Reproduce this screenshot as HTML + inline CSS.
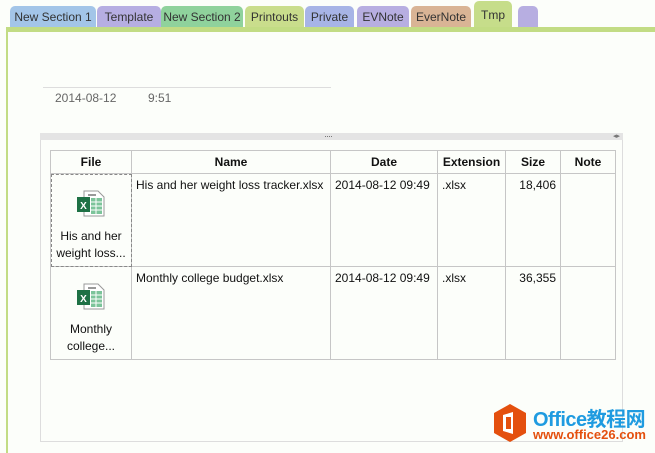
<!DOCTYPE html>
<html><head><meta charset="utf-8"><style>
*{margin:0;padding:0;box-sizing:border-box}
body{width:655px;height:453px;overflow:hidden;background:#fcfefa;font-family:"Segoe UI","Liberation Sans",sans-serif;position:relative}
.tab{position:absolute;top:6px;height:22px;border-radius:5px 5px 0 0;font-size:12px;color:#333;text-align:center;line-height:22px}
.band{position:absolute;left:6px;top:27px;width:649px;height:5px;background:#c2dc84}
.lb{position:absolute;left:6px;top:27px;width:2px;height:426px;background:#c2dc84}
.abs{position:absolute}
table{position:absolute;left:50px;top:150px;border-collapse:collapse;font-size:12px;color:#111}
td,th{border:1px solid #c6c6c6;vertical-align:top}
th{height:23px;font-weight:bold;text-align:center;vertical-align:middle}
td{height:93px;padding:4px 4px}
.ic{text-align:center;padding-top:16px;line-height:17px}
</style></head><body>
<div class="tab" style="left:10px;width:86px;background:#a3c5e8">New Section 1</div>
<div class="tab" style="left:97px;width:64px;background:#b6aee2">Template</div>
<div class="tab" style="left:161px;width:82px;background:#8fd29c">New Section 2</div>
<div class="tab" style="left:245px;width:59px;background:#c9dd8c">Printouts</div>
<div class="tab" style="left:305px;width:49px;background:#a7b4e6">Private</div>
<div class="tab" style="left:357px;width:52px;background:#b7aee1">EVNote</div>
<div class="tab" style="left:411px;width:60px;background:#d9b495">EverNote</div>
<div class="tab" style="left:474px;width:38px;top:1px;height:27px;background:#c6dd8a;line-height:28px">Tmp</div>
<div class="tab" style="left:518px;width:20px;background:#b7aee1"></div>
<div class="band"></div><div class="lb"></div>
<div class="abs" style="left:43px;top:87px;width:288px;height:1px;background:#ddd"></div>
<div class="abs" style="left:55px;top:91px;font-size:12px;color:#666">2014-08-12</div>
<div class="abs" style="left:148px;top:91px;font-size:12px;color:#666">9:51</div>
<div class="abs" style="left:40px;top:133px;width:583px;height:309px;border:1px solid #ddd;border-top:none"></div>
<div class="abs" style="left:40px;top:133px;width:583px;height:7px;background:#e4e4e4"></div>
<div class="abs" style="left:324px;top:131px;font-size:9px;color:#666;letter-spacing:-1px">····</div>
<div class="abs" style="left:613px;top:132px;font-size:7px;color:#777">◂▸</div>
<table>
<tr><th style="width:81px">File</th><th style="width:199px">Name</th><th style="width:107px">Date</th><th style="width:68px">Extension</th><th style="width:55px">Size</th><th style="width:55px">Note</th></tr>
<tr><td class="ic" style="height:91px;outline:1px dashed #888;outline-offset:-1px"><svg width="30" height="27" viewBox="0 0 30 27"><path d="M8 1h14l6 6v19H8z" fill="#fff" stroke="#999"/><rect x="12" y="4" width="8" height="2" fill="#999"/><rect x="15" y="8" width="11" height="16" fill="#7cc49a"/><path d="M15 12h11M15 16h11M15 20h11M20 8v16" stroke="#fff"/><rect x="1" y="7" width="13" height="15" fill="#1e7145"/><text x="7.5" y="19" font-size="10" font-weight="bold" fill="#fff" text-anchor="middle" font-family="Liberation Sans">X</text></svg><div style="margin-top:6px;font-size:12px">His and her<br>weight loss...</div></td><td>His and her weight loss tracker.xlsx</td><td>2014-08-12 09:49</td><td>.xlsx</td><td style="text-align:right">18,406</td><td></td></tr>
<tr><td class="ic" style="height:91px"><svg width="30" height="27" viewBox="0 0 30 27"><path d="M8 1h14l6 6v19H8z" fill="#fff" stroke="#999"/><rect x="12" y="4" width="8" height="2" fill="#999"/><rect x="15" y="8" width="11" height="16" fill="#7cc49a"/><path d="M15 12h11M15 16h11M15 20h11M20 8v16" stroke="#fff"/><rect x="1" y="7" width="13" height="15" fill="#1e7145"/><text x="7.5" y="19" font-size="10" font-weight="bold" fill="#fff" text-anchor="middle" font-family="Liberation Sans">X</text></svg><div style="margin-top:6px;font-size:12px">Monthly<br>college...</div></td><td>Monthly college budget.xlsx</td><td>2014-08-12 09:49</td><td>.xlsx</td><td style="text-align:right">36,355</td><td></td></tr>
</table>
<svg class="abs" style="left:492px;top:403px" width="36" height="40" viewBox="0 0 36 40"><path d="M18 1L34 10V30L18 39L2 30V10Z" fill="#e4500e"/><path d="M11 12l10-3v22l-10-3z" fill="#fff"/><rect x="14" y="14" width="5" height="12" fill="#e4500e"/></svg>
<div class="abs" style="left:533px;top:403px;font-size:20px;font-weight:bold;color:#1f9be0;font-family:'Liberation Sans','Noto Sans CJK SC',sans-serif;letter-spacing:-0.5px">Office教程网</div>
<div class="abs" style="left:533px;top:427px;font-size:13px;font-weight:bold;color:#e4500e;font-family:'Liberation Sans',sans-serif">www.office26.com</div>
</body></html>
